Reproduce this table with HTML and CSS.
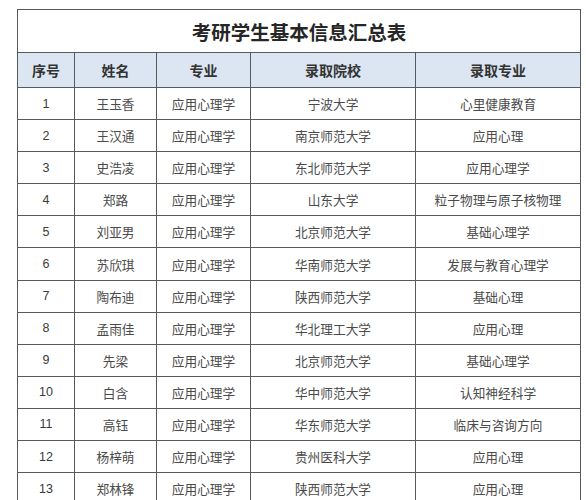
FILE: index.html
```html
<!DOCTYPE html>
<html lang="zh-CN">
<head>
<meta charset="utf-8">
<link rel="stylesheet" href="styles.css">
</head>
<body>
<table class="sheet">
  <colgroup>
    <col class="c1"><col class="c2"><col class="c3"><col class="c4"><col class="c5">
  </colgroup>
  <thead>
    <tr class="title-row"><th colspan="5" class="title">考研学生基本信息汇总表</th></tr>
    <tr class="head-row">
      <th>序号</th><th>姓名</th><th>专业</th><th>录取院校</th><th>录取专业</th>
    </tr>
  </thead>
  <tbody>
    <tr><td class="num">1</td><td>王玉香</td><td>应用心理学</td><td>宁波大学</td><td>心里健康教育</td></tr>
    <tr><td class="num">2</td><td>王汉通</td><td>应用心理学</td><td>南京师范大学</td><td>应用心理</td></tr>
    <tr><td class="num">3</td><td>史浩凌</td><td>应用心理学</td><td>东北师范大学</td><td>应用心理学</td></tr>
    <tr><td class="num">4</td><td>郑路</td><td>应用心理学</td><td>山东大学</td><td>粒子物理与原子核物理</td></tr>
    <tr><td class="num">5</td><td>刘亚男</td><td>应用心理学</td><td>北京师范大学</td><td>基础心理学</td></tr>
    <tr><td class="num">6</td><td>苏欣琪</td><td>应用心理学</td><td>华南师范大学</td><td>发展与教育心理学</td></tr>
    <tr><td class="num">7</td><td>陶布迪</td><td>应用心理学</td><td>陕西师范大学</td><td>基础心理</td></tr>
    <tr><td class="num">8</td><td>孟雨佳</td><td>应用心理学</td><td>华北理工大学</td><td>应用心理</td></tr>
    <tr><td class="num">9</td><td>先梁</td><td>应用心理学</td><td>北京师范大学</td><td>基础心理学</td></tr>
    <tr><td class="num">10</td><td>白含</td><td>应用心理学</td><td>华中师范大学</td><td>认知神经科学</td></tr>
    <tr><td class="num">11</td><td>高钰</td><td>应用心理学</td><td>华东师范大学</td><td>临床与咨询方向</td></tr>
    <tr><td class="num">12</td><td>杨梓萌</td><td>应用心理学</td><td>贵州医科大学</td><td>应用心理</td></tr>
    <tr><td class="num">13</td><td>郑林锋</td><td>应用心理学</td><td>陕西师范大学</td><td>应用心理</td></tr>
  </tbody>
</table>
</body>
</html>
```
FILE: styles.css
```css
html, body {
  margin: 0;
  padding: 0;
  background: #ffffff;
}
body {
  padding: 9px 0 0 17px;
  font-family: "Noto Sans CJK SC", "Noto Sans", sans-serif;
}
.sheet {
  border-collapse: collapse;
  table-layout: fixed;
  width: 563px;
}
.c1 { width: 57px; }
.c2 { width: 82px; }
.c3 { width: 94px; }
.c4 { width: 165px; }
.c5 { width: 165px; }
.sheet th, .sheet td {
  border: 1px solid #555a5e;
  text-align: center;
  padding: 0;
  white-space: nowrap;
}
.title {
  height: 42px;
  font-size: 19.5px;
  font-weight: 700;
  color: #262626;
  background: #ffffff;
  letter-spacing: 0;
}
.head-row th {
  height: 34px;
  background: #dce6f2;
  font-size: 14px;
  font-weight: 700;
  color: #333333;
}
.sheet td {
  height: 31.1px;
  font-size: 12.7px;
  color: #4a4a4a;
}
.sheet td.num {
  font-family: "Liberation Sans", "Noto Sans", sans-serif;
  font-size: 12.5px;
  color: #3a3a3a;
}
```
